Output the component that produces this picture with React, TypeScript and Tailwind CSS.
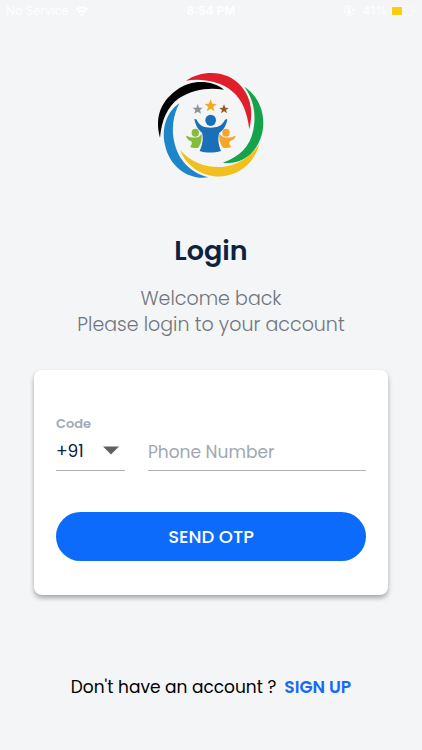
import React from 'react';

function Logo() {
  return (
    <svg width="122" height="122" viewBox="0 0 366 366" role="img" aria-label="Community logo">
      <path fill="#df202a" d="M108 47C160 12 235 16 275 65C308 105 308 150 298 193C292 145 278 105 248 80C208 46 150 40 108 47Z" />
      <path fill="#000" d="M222 74C184 44 124 43 80 75C25 115 16 165 30 218C35 165 52 125 87 100C130 71 180 67 222 74Z" />
      <path fill="#1c86c8" d="M88 115C50 140 34 190 45 240C60 310 120 346 175 337C130 325 90 295 75 240C62 195 70 150 88 115Z" />
      <path fill="#f2c01e" d="M90 254C110 310 170 341 225 333C280 325 315 285 328 238C300 275 265 301 215 306C165 308 120 290 90 254Z" />
      <path fill="#14a34a" d="M283 65C330 95 350 155 335 210C318 270 270 301 218 293C270 275 300 245 310 195C320 140 308 100 283 65Z" />
      <path fill="#8d959b" d="M143 117L147 128L158 128L150 135L153 146L143 140L133 146L136 135L128 128L139 128Z" />
      <path fill="#f6a91b" d="M182 103L187 116L200 117L190 125L193 139L182 131L171 139L174 125L164 117L177 116Z" />
      <path fill="#9a5a1f" d="M222 118L226 128L236 129L228 135L231 145L222 139L213 145L216 135L208 129L218 128Z" />
      <g fill="#1a70b8">
        <ellipse cx="182" cy="166" rx="16" ry="17" />
        <path d="M133 163C137 161 140 164 142 168C150 184 164 188 182 188C200 188 214 184 223 168C225 163 229 161 232 164C228 183 220 195 208 203C202 222 206 240 213 258C192 264 168 264 149 258C157 240 161 222 156 203C144 194 137 182 133 163Z" />
      </g>
      <g fill="#86bd36">
        <ellipse cx="136" cy="203" rx="11" ry="12" />
        <path d="M110 212C119 217 132 220 146 216L155 207C156 225 153 237 145 248C137 250 128 249 120 246C125 240 127 234 124 229C115 226 110 220 108 213Z" />
      </g>
      <g fill="#f5a62a">
        <ellipse cx="228" cy="203" rx="11" ry="12" />
        <path d="M255 212C247 217 233 220 219 216L208 207C206 225 211 237 219 248C227 250 236 249 244 246C238 240 236 234 240 229C249 226 255 220 257 214Z" />
      </g>
    </svg>
  );
}

function StatusBar() {
  return (
    <div className="grid h-[22px] grid-cols-3 items-center px-1.5 font-['Inter',sans-serif] text-xs text-white">
      <div className="flex items-center gap-1.5">
        <span>No Service</span>
        <svg width="14" height="11" viewBox="0 0 14 11" fill="none" stroke="currentColor" strokeWidth="2" aria-hidden="true">
          <path d="M1 4C4.500 .7 9.500 .7 13 4M3.400 6.500C5.500 4.600 8.500 4.600 10.600 6.500" />
          <path d="M5 8.300C6.200 7.300 7.800 7.300 9 8.300L7 10.500Z" fill="currentColor" stroke="none" />
        </svg>
      </div>
      <span className="text-center font-semibold">8:54 PM</span>
      <div className="flex items-center justify-end gap-1">
        <svg className="mr-1" width="12" height="12" viewBox="0 0 12 12" fill="none" stroke="currentColor" aria-hidden="true">
          <path d="M10 8.500A4.800 4.800 0 1 1 10.800 5M9 4.500L10.800 5.500L12 4" />
          <path d="M4 5.500H8V8.500H4Z" fill="currentColor" stroke="none" />
          <path d="M4.800 5.500V4.500A1.200 1.200 0 0 1 7.200 4.500V5.500" />
        </svg>
        <span>41%</span>
        <svg width="25" height="10" viewBox="0 0 25 10" aria-hidden="true">
          <rect x=".5" y=".5" width="21" height="9" rx="2" fill="none" stroke="white" strokeOpacity=".5" />
          <path d="M23 3V7C24.500 6 24.500 4 23 3Z" fill="white" fillOpacity=".5" />
          <rect x="1" y="1" width="10" height="8" rx="1" fill="#ffcc0a" />
        </svg>
      </div>
    </div>
  );
}

export default function App() {
  return (
    <div className="min-h-screen bg-[#f3f5f7] font-['Poppins','Inter',sans-serif]">
      <StatusBar />

      <main className="flex flex-col items-center px-[34px] pt-[43px]">
        <Logo />

        <h1 className="mt-11 text-[27px] leading-10 font-semibold text-[#0b2341]">Login</h1>
        <p className="mt-[15px] text-center text-[19px] leading-[26px] font-light text-[#70747c]">
          Welcome back
          <br />
          Please login to your account
        </p>

        <form
          className="mt-8 w-full rounded-lg bg-white px-[22px] pt-11 pb-[34px] shadow-[0_3px_5px_rgba(0,0,0,0.32)]"
          onSubmit={(e) => e.preventDefault()}
        >
          <div className="flex items-end gap-[23px]">
            <div className="w-[69px]">
              <label htmlFor="code" className="block text-[13px] leading-5 font-semibold text-[#a4aab5]">
                Code
              </label>
              <div className="relative border-b border-[#b0b0b0]">
                <select
                  id="code"
                  defaultValue="+91"
                  className="block h-9 w-full appearance-none bg-transparent text-[17px] text-[#0b2341] outline-none"
                >
                  <option>+91</option>
                  <option>+1</option>
                  <option>+44</option>
                </select>
                <svg className="pointer-events-none absolute top-3 right-1.5" width="16" height="9" viewBox="0 0 16 9" aria-hidden="true">
                  <path d="M0 .5H16L8 8.500Z" fill="#606060" />
                </svg>
              </div>
            </div>
            <input
              type="tel"
              aria-label="Phone Number"
              placeholder="Phone Number"
              className="h-[37px] min-w-0 flex-1 border-b border-[#b0b0b0] bg-transparent text-[17px] text-[#0b2341] outline-none placeholder:text-[#a0a7b3]"
            />
          </div>

          <button type="submit" className="mt-[41px] h-[49px] w-full rounded-full bg-[#0d6bfb] text-[18px] font-medium text-white">
            SEND OTP
          </button>
        </form>

        <p className="mt-[79px] pb-10 text-[17px] leading-[26px] text-black">
          Don't have an account ?
          <a href="#signup" className="ml-2 text-[17px] font-semibold text-[#1769ef]">SIGN UP</a>
        </p>
      </main>
    </div>
  );
}
